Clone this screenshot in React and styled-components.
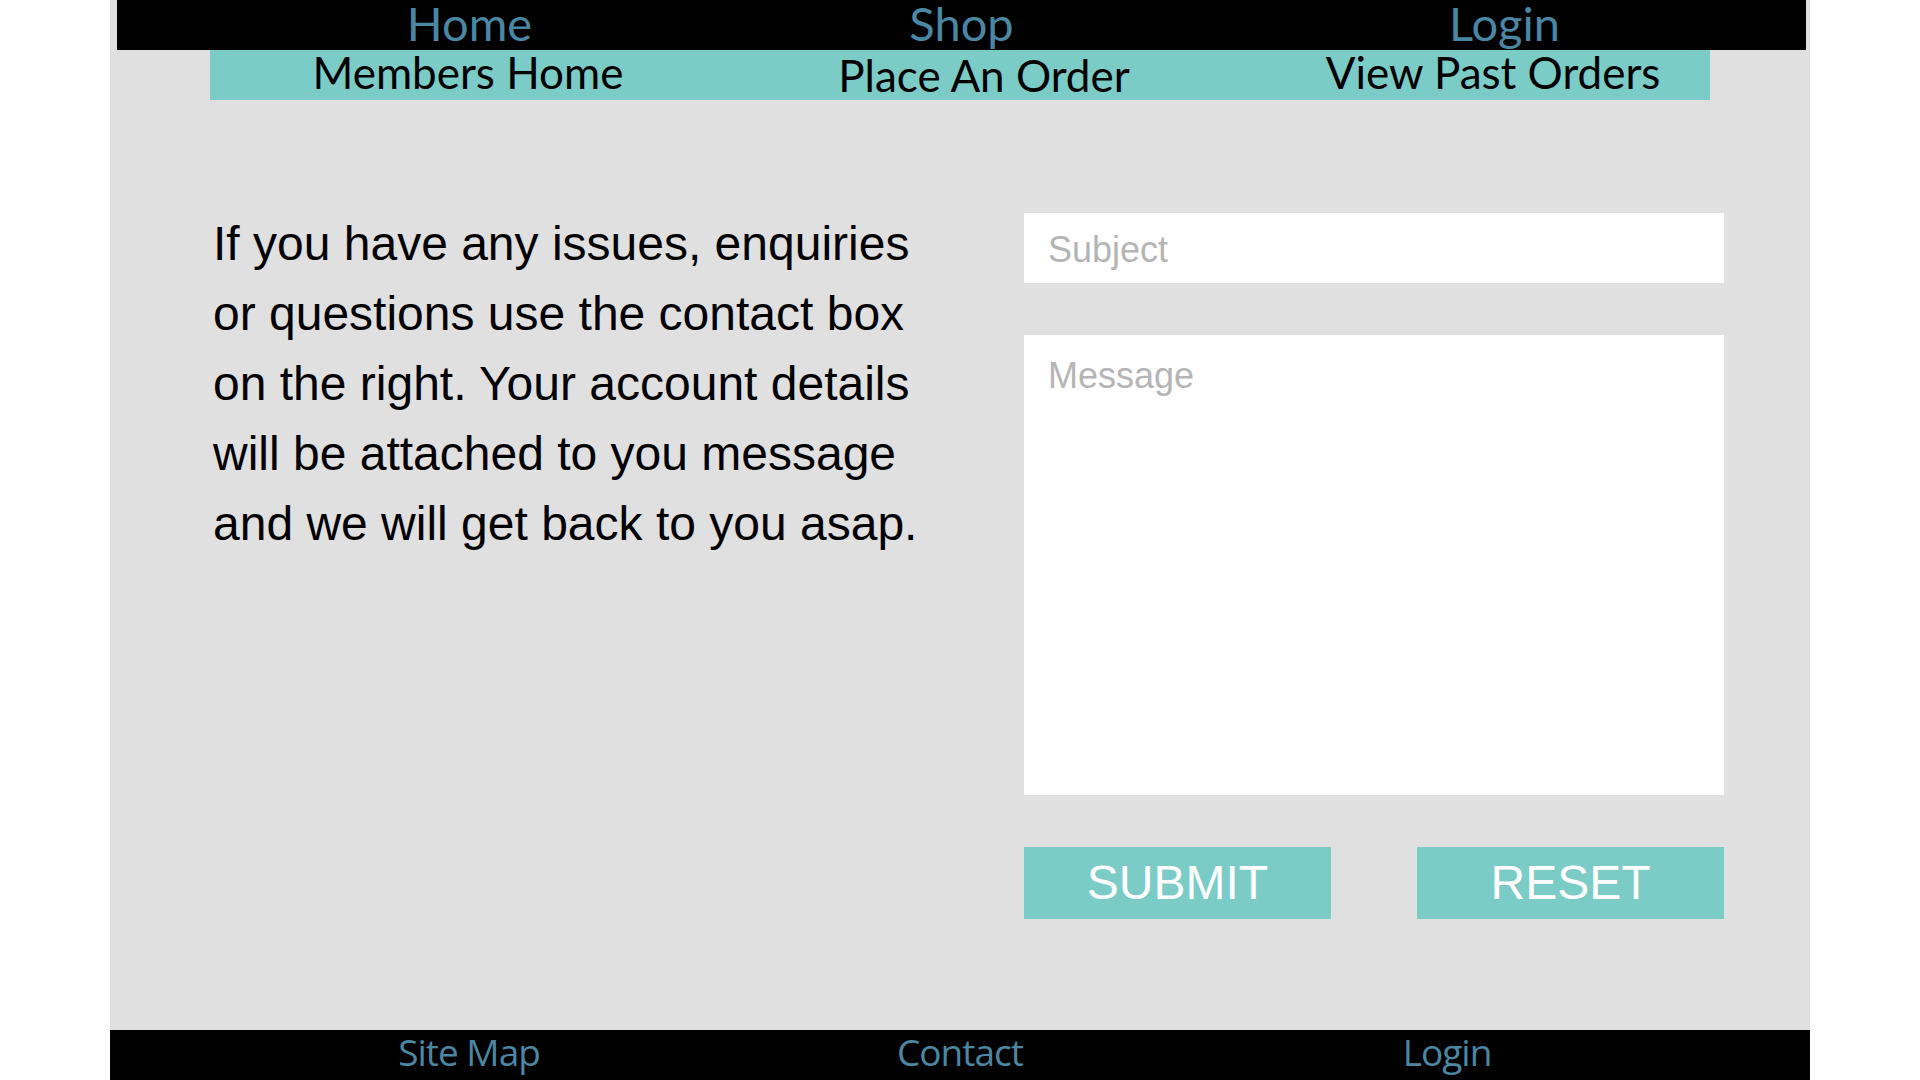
import React from "react";
import styled, { createGlobalStyle } from "styled-components";

const GlobalStyle = createGlobalStyle`
  html, body {
    margin: 0;
    padding: 0;
    background: #ffffff;
  }
  * {
    box-sizing: border-box;
  }
`;

const Page = styled.div`
  width: 1700px;
  min-height: 100vh;
  margin: 0 auto;
  background-color: #e0e0e0;
  display: flex;
  flex-direction: column;
`;

const TopBar = styled.header`
  height: 50px;
  margin: 0 4px 0 7px;
  background-color: #000;
  display: flex;
  justify-content: center;
`;

const NavRow = styled.nav`
  width: 1500px;
  display: grid;
  grid-template-columns: repeat(3, 1fr);
  align-items: start;
`;

const SubBar = styled.div`
  width: 1500px;
  height: 50px;
  margin: 0 auto;
  background-color: #7bcbc7;
  display: grid;
  grid-template-columns: repeat(3, 1fr);
  align-items: start;
`;

const NavLink = styled.a`
  display: block;
  text-align: center;
  font-family: Lato, "Open Sans", sans-serif;
  font-size: 47px;
  line-height: 47px;
  color: #4a87a4;
  text-decoration: none;
  padding-left: ${(p) => (p.$shift > 0 ? p.$shift * 2 : 0)}px;
  padding-right: ${(p) => (p.$shift < 0 ? -p.$shift * 2 : 0)}px;
  cursor: pointer;
`;

const SubLink = styled.a`
  display: block;
  text-align: center;
  font-family: Lato, "Open Sans", sans-serif;
  font-size: 44px;
  line-height: 44px;
  color: #000;
  text-decoration: none;
  padding-top: ${(p) => p.$drop || 0}px;
  padding-left: ${(p) => (p.$shift > 0 ? p.$shift * 2 : 0)}px;
  cursor: pointer;
`;

const Content = styled.main`
  display: grid;
  grid-template-columns: 1fr 700px;
  padding: 109px 86px 0 103px;
  flex: 1;
`;

const Intro = styled.p`
  margin: 0;
  max-width: 715px;
  font-family: "Liberation Sans", Arial, sans-serif;
  font-size: 48px;
  line-height: 70px;
  color: #000;
`;

const ContactForm = styled.form`
  padding-top: 4px;
  display: flex;
  flex-direction: column;
  gap: 52px;
`;

const fieldStyles = `
  width: 100%;
  border: none;
  outline: none;
  background-color: #fff;
  font-family: "Liberation Sans", Arial, sans-serif;
  font-size: 36px;
  color: #333;
  padding: 0 24px;
  &::placeholder {
    color: #b5b5b5;
  }
`;

const SubjectInput = styled.input`
  ${fieldStyles}
  height: 70px;
  padding-top: 4px;
`;

const MessageArea = styled.textarea`
  ${fieldStyles}
  height: 460px;
  resize: none;
  padding-top: 20px;
  line-height: 42px;
`;

const ButtonRow = styled.div`
  display: flex;
  justify-content: space-between;
`;

const ActionButton = styled.button`
  width: 307px;
  height: 72px;
  border: none;
  background-color: #7bcbc7;
  color: #fff;
  font-family: "Liberation Sans", Arial, sans-serif;
  font-size: 48px;
  line-height: 72px;
  padding: 0;
  cursor: pointer;
`;

const Footer = styled.footer`
  height: 50px;
  background-color: #000;
  display: grid;
  grid-template-columns: repeat(3, 1fr);
  padding: 0 100px;
`;

const FooterLink = styled.a`
  display: block;
  text-align: center;
  font-family: "Open Sans", sans-serif;
  font-size: 37px;
  line-height: 44px;
  letter-spacing: -1px;
  color: #4a87a4;
  text-decoration: none;
  padding-left: ${(p) => (p.$shift > 0 ? p.$shift * 2 : 0)}px;
  padding-right: ${(p) => (p.$shift < 0 ? -p.$shift * 2 : 0)}px;
  cursor: pointer;
`;

function App() {
  return (
    <>
      <GlobalStyle />
      <Page>
        <TopBar>
          <NavRow>
            <NavLink $shift={8}>Home</NavLink>
            <NavLink $shift={0}>Shop</NavLink>
            <NavLink $shift={43}>Login</NavLink>
          </NavRow>
        </TopBar>
        <SubBar>
          <SubLink $shift={8}>Members Home</SubLink>
          <SubLink $shift={24} $drop={3}>Place An Order</SubLink>
          <SubLink $shift={33}>View Past Orders</SubLink>
        </SubBar>
        <Content>
          <Intro>
            If you have any issues, enquiries or questions use the contact box
            on the right. Your account details will be attached to you message
            and we will get back to you asap.
          </Intro>
          <ContactForm onSubmit={(e) => e.preventDefault()}>
            <SubjectInput type="text" placeholder="Subject" />
            <MessageArea placeholder="Message" />
            <ButtonRow>
              <ActionButton type="submit">SUBMIT</ActionButton>
              <ActionButton type="reset">RESET</ActionButton>
            </ButtonRow>
          </ContactForm>
        </Content>
        <Footer>
          <FooterLink $shift={9}>Site Map</FooterLink>
          <FooterLink $shift={0}>Contact</FooterLink>
          <FooterLink $shift={-13}>Login</FooterLink>
        </Footer>
      </Page>
    </>
  );
}

export default App;
